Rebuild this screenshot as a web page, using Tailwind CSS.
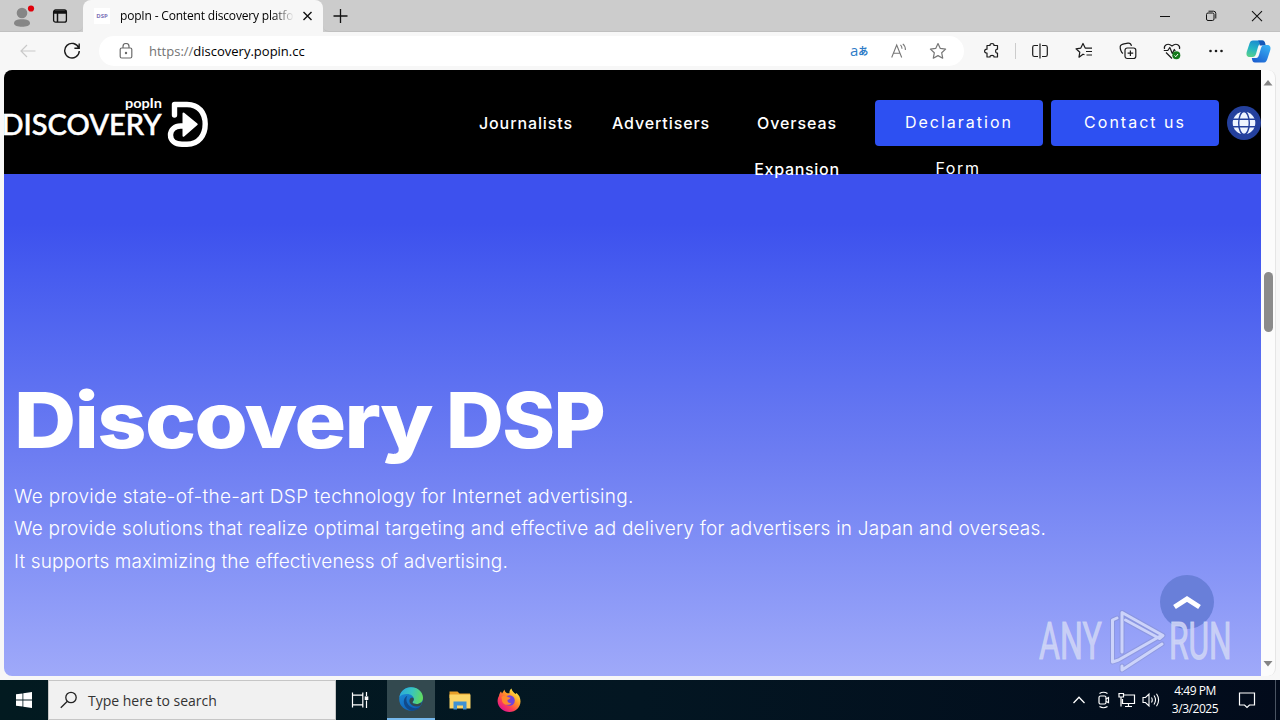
<!DOCTYPE html>
<html lang="en">
<head>
<meta charset="utf-8">
<title>popIn - Content discovery platform</title>
<script src="https://cdn.jsdelivr.net/npm/@tailwindcss/browser@4"></script>
</head>
<body class="w-[1280px] h-[720px] overflow-hidden flex flex-col bg-[#f7f7f7] font-['Open_Sans','Noto_Sans_CJK_JP',sans-serif] text-black">

<!-- Tab strip -->
<div class="h-8 shrink-0 flex bg-[#cccccc]">
  <div class="w-[83px] h-8 flex items-center pl-[12px] rounded-br-md border-b border-[#c0c0c0]">
    <svg class="w-6 h-7 -mt-[3px]" viewBox="0 0 24 28" fill="none"><circle cx="10" cy="13" r="5.300" fill="#868686"/><path d="M2 23.500c0-3 3-4.200 8-4.200s8 1.200 8 4.200c0 2-4 3.300-8 3.300s-8-1.300-8-3.300z" fill="#868686"/><circle cx="19" cy="8.500" r="3.100" fill="#e0000b"/></svg>
    <svg class="w-4 h-4 ml-[16px]" viewBox="0 0 16 16" fill="none" stroke="#111" stroke-width="1.300"><rect x="1.600" y="2" width="12.800" height="12.200" rx="2"/><path d="M2 3.600h12M2 5h12M5.500 5v9" stroke-width="1.500"/></svg>
  </div>
  <div class="w-[240px] h-8 bg-[#f7f7f7] rounded-t-lg flex items-center pl-[11px]">
    <div class="w-4 h-4 bg-white text-[6px] leading-4 text-center font-bold text-[#7d74b8]">DSP</div>
    <div class="ml-[10px] w-[174px] overflow-hidden whitespace-nowrap text-[12px] leading-5 tracking-[-0.180px] bg-linear-to-r from-black from-88% to-transparent bg-clip-text text-transparent">popIn - Content discovery platform</div>
    <svg class="w-3 h-3 ml-[8px]" viewBox="0 0 12 12" stroke="#111" stroke-width="1.400"><path d="M1.500 2l8 8M9.500 2l-8 8"/></svg>
  </div>
  <div class="flex-1 flex items-center justify-between pl-[10px] pr-[17px] rounded-bl-md border-b border-[#c0c0c0]">
    <svg class="w-4 h-4" viewBox="0 0 16 16" stroke="#111" stroke-width="1.300"><path d="M7.500 1v14M.5 8h14"/></svg>
    <div class="flex items-center gap-[34px]">
      <svg class="w-3 h-3" viewBox="0 0 12 12" stroke="#111"><path d="M1 6.500h10"/></svg>
      <svg class="w-3 h-3" viewBox="0 0 12 12" fill="none" stroke="#111"><rect x="1.500" y="3" width="7.500" height="7.500" rx="1.500"/><path d="M3.500 1.200h5a2.300 2.300 0 0 1 2.300 2.300v5"/></svg>
      <svg class="w-3 h-3" viewBox="0 0 12 12" stroke="#111" stroke-width="1.100"><path d="M1 1.200l10 10M11 1.200l-10 10"/></svg>
    </div>
  </div>
</div>

<!-- Toolbar -->
<div class="h-[38px] shrink-0 flex items-center pl-[20px] pr-[9px]">
  <svg class="w-4 h-4" viewBox="0 0 16 16" fill="none" stroke="#c9c9c9" stroke-width="1.200"><path d="M15.500 8H1M7 2L1 8l6 6"/></svg>
  <svg class="w-[18px] h-[18px] ml-[27px]" viewBox="0 0 18 18" fill="none" stroke="#1b1b1b" stroke-width="1.400"><path d="M15.800 6A7.300 7.300 0 1 0 16.300 9M16.200 1.500v4.800h-4.800"/></svg>
  <div class="ml-[18px] w-[865px] h-[30px] bg-white rounded-full flex items-center pl-[20px] pr-[17px]">
    <svg class="w-[14px] h-4" viewBox="0 0 14 16" fill="none" stroke="#6b6b6b" stroke-width="1.200"><rect x="1.200" y="5" width="11.600" height="10" rx="1.500"/><path d="M4 5V3.500a3 3 0 0 1 6 0V5"/><circle cx="7" cy="10" r=".6" fill="#6b6b6b"/></svg>
    <div class="ml-[16px] w-[200px] text-[13px] leading-5 whitespace-nowrap"><span class="text-[#737373]">https://</span>discovery.popin.cc</div>
    <div class="ml-auto flex items-center">
      <div class="w-[18px] -ml-px mr-px text-[#2f7cc7] text-[15px] leading-5 whitespace-nowrap flex items-center"><span class="-mt-0.5">a</span><span class="text-[10px] font-bold">あ</span></div>
      <svg class="w-4 h-4 ml-[22px]" viewBox="0 0 16 16" fill="none" stroke="#777" stroke-width="1.100"><path d="M.7 14.500L5.700 2l5 12.500M2.400 10.300h6.600M9.500 1.800q1.500 1.500 1.500 4M11.800.8q2.800 2.300 2.600 6.200"/></svg>
      <svg class="w-[18px] h-[18px] ml-[22px]" viewBox="0 0 18 18" fill="none" stroke="#777" stroke-width="1.200" stroke-linejoin="round"><path d="M9 1.500l2.300 4.900 5.300.7-3.900 3.700 1 5.400L9 13.600l-4.700 2.600 1-5.400L1.400 7.100l5.300-.7z"/></svg>
    </div>
  </div>
  <svg class="w-[18px] h-[18px] ml-[19px]" viewBox="0 0 18 18" fill="none" stroke="#1b1b1b" stroke-width="1.200" stroke-linejoin="round"><path d="M4 3.500h3C6.500.8 11.500.8 11 3.500h3.500v3.700c-2.500-.3-2.500 4.200 0 3.800V15H11c.4-2.300-4.300-2.300-4 0H4v-4C.8 11.300.8 7 4 7.200z"/></svg>
  <div class="w-px h-4 bg-[#cccccc] ml-[14px]"></div>
  <svg class="w-[18px] h-[18px] ml-[15px]" viewBox="0 0 18 18" fill="none" stroke="#1b1b1b" stroke-width="1.200"><path d="M7 3.500H3.500A1.800 1.800 0 0 0 1.700 5.300v7.400a1.800 1.800 0 0 0 1.800 1.800H7M11 3.500h3.500a1.800 1.800 0 0 1 1.800 1.800v7.400a1.800 1.800 0 0 1-1.800 1.800H11M9 1.500v15"/></svg>
  <svg class="w-[18px] h-[18px] ml-[26px]" viewBox="0 0 18 18" fill="none" stroke="#1b1b1b" stroke-width="1.200" stroke-linejoin="round"><path d="M9.500 12.800L8 12.200l-4 3 .8-5L1 6.800l4.800-.7L8 1.500l2.200 4.600H17M11 9.500h6M11.500 13h5.500"/></svg>
  <svg class="w-[18px] h-[18px] ml-[26px]" viewBox="0 0 18 18" fill="none" stroke="#1b1b1b" stroke-width="1.200"><rect x="6" y="6" width="10.800" height="10.500" rx="2.200"/><path d="M11.400 8.500v5.500M8.600 11.200h5.600M4 11.500C2.200 10.500 1 6.800 1.200 4.500 1.500 2.600 3 2.200 5 1.800l4-.6c1.800-.2 3 .8 3.500 2.600"/></svg>
  <svg class="w-[18px] h-[18px] ml-[26px]" viewBox="0 0 18 18" fill="none" stroke="#1b1b1b" stroke-width="1.200" stroke-linejoin="round"><path d="M1.500 7C.6 3.500 4.500.2 9 4c4.500-3.800 8.400-.5 7.500 3M.8 8.500h4l2-3 2.500 6 2-4 1 1.500M3 10.500l6 6"/><circle cx="13.300" cy="13.300" r="4" fill="#157a1c" stroke="none"/><path d="M11.500 13.500l1.300 1.200 2.200-2.700" stroke="#fff" stroke-width="1"/></svg>
  <svg class="w-[18px] h-[18px] ml-[26px]" viewBox="0 0 18 18" fill="#1b1b1b"><circle cx="3.500" cy="9" r="1.300"/><circle cx="9" cy="9" r="1.300"/><circle cx="14.500" cy="9" r="1.300"/></svg>
  <svg class="w-[25px] h-[23px] ml-auto" viewBox="0 0 25 23">
    <defs><linearGradient id="cp1" x1="0.500" y1="0" x2="0.200" y2="1"><stop offset="0" stop-color="#1c8bd0"/><stop offset=".5" stop-color="#25b5c4"/><stop offset="1" stop-color="#5ad08a"/></linearGradient><linearGradient id="cp2" x1="0.800" y1="0" x2="0.200" y2="1"><stop offset="0" stop-color="#37b0f4"/><stop offset="1" stop-color="#1b5fd0"/></linearGradient></defs>
    <path d="M7 .5h9c2 0 2.700 1.500 3.200 3.500H15c-2 0-2.500 1.500-3 3l-2 7c-.7 2-1.500 3-3.500 3H4c-3 0-4-2-3.300-5L3.500 3.500C4.200 1.500 5 .5 7 .5z" fill="url(#cp1)"/>
    <path d="M13 .5h3.500c2 0 2.700 2 3.200 5h-6C13.500 3.500 14 2 12 .5z" fill="#1557b8"/>
    <path d="M18 22.500H9c-2 0-2.700-1.500-3.200-4.500H10c2 0 2.500-1.500 3-3l2-7c.7-2 1.500-3 3.500-3H21c3 0 4 2 3.300 5l-2.800 8.500c-.7 2-1.500 4-3.500 4z" fill="url(#cp2)"/>
  </svg>
</div>

<!-- Page viewport -->
<div class="h-[610px] shrink-0 flex pl-1 pr-[4px] pb-1">
  <main class="w-[1257px] h-[606px] shrink-0 rounded-l-lg overflow-hidden flex flex-col font-[Inter,sans-serif] text-white">
    <header class="relative z-10 h-[104px] shrink-0 bg-black flex items-start">
      <svg class="w-[206px] h-[60px] mt-[22px] shrink-0" viewBox="4 92 206 60" fill="#fff">
        <text x="1.500" y="134.800" font-family="Lato" font-size="28.500" font-weight="500" stroke="#fff" stroke-width=".5" textLength="160" lengthAdjust="spacingAndGlyphs">DISCOVERY</text>
        <text x="125" y="107.700" font-family="Lato" font-size="13" font-weight="700" textLength="37" lengthAdjust="spacingAndGlyphs">popIn</text>
        <path d="M174.500 115V104.500H187c12 0 18.200 8.500 18.200 19.500s-6.200 20.200-18.200 20.200h-5c-7 0-11.500-3.800-11.500-9.200 0-5.500 4.500-9 10-9h5" fill="none" stroke="#fff" stroke-width="5.400" stroke-linejoin="round" stroke-linecap="round"/>
        <path d="M183.500 113.500l13.200 10.800-13.200 11.500z" stroke="#fff" stroke-width="2" stroke-linejoin="round"/>
      </svg>
      <nav class="ml-[249px] pt-[30px] flex text-[16px] leading-[46px] font-medium text-center">
        <div class="w-[134px] tracking-[0.900px]">Journalists</div>
        <div class="w-[136px] tracking-[0.900px]">Advertisers</div>
        <div class="w-[136px] tracking-[0.900px]"><div>Overseas</div><div class="tracking-[0.700px]">Expansion</div></div>
      </nav>
      <div class="mt-[30px] ml-[10px] flex gap-2 text-[16px] leading-[46px] text-center shrink-0">
        <div class="w-[168px] h-[46px] bg-[#2d50f2] rounded-[4px]"><div class="tracking-[2px] -mt-px">Declaration</div><div class="tracking-[1.600px] pr-0.5">Form</div></div>
        <div class="w-[168px] h-[46px] bg-[#2d50f2] rounded-[4px]"><div class="tracking-[2px] -mt-px">Contact us</div></div>
      </div>
      <svg class="w-[34px] h-[34px] mt-[36px] ml-2 shrink-0" viewBox="0 0 34 34"><circle cx="17" cy="17" r="17" fill="#24409d"/><circle cx="17" cy="17" r="11.300" fill="#eef4ff"/><g fill="none" stroke="#24409d" stroke-width="1.400"><ellipse cx="17" cy="17" rx="5.300" ry="11.500"/><path d="M5 13.200h24M5 20.800h24"/></g></svg>
    </header>
    <section class="flex-1 bg-linear-to-b from-[#3d51ee] from-10% via-[#6d7df2] via-56% to-[#9fa9f9] pl-[10px] pt-[192px]">
      <h1 class="flex text-[77px] leading-[108px] h-[115px] font-extrabold tracking-[-1.500px] whitespace-nowrap"><span class="w-[432px]"><span class="inline-block origin-left scale-x-[1.118]">Discovery</span></span> <span class="inline-block origin-left scale-x-[1.040]">DSP</span></h1>
      <div class="text-[19px] leading-[32.400px] font-light whitespace-nowrap">
        <p class="tracking-[0.300px]">We provide state-of-the-art DSP technology for Internet advertising.</p>
        <p class="tracking-[0.240px]">We provide solutions that realize optimal targeting and effective ad delivery for advertisers in Japan and overseas.</p>
        <p class="tracking-[0.130px]">It supports maximizing the effectiveness of advertising.</p>
      </div>
    </section>
  </main>
  <div class="w-[15px] h-[606px] bg-[#fcfcfc] rounded-r-lg border-r border-[#e6e6e6] flex flex-col items-center">
    <svg class="w-[10px] h-[6px] mt-[10px]" viewBox="0 0 10 6" fill="#858585"><path d="M5 0l4.500 5.500H.5z"/></svg>
    <div class="w-[9px] h-[60px] mt-[186px] rounded-full bg-[#8b8b8b]"></div>
    <svg class="w-[10px] h-[6px] mt-auto mb-[9px]" viewBox="0 0 10 6" fill="#858585"><path d="M5 5.500L.5 0h9z"/></svg>
  </div>
</div>

<!-- Back-to-top button, floating over the page -->
<div class="absolute left-[1160px] top-[575px] w-[54px] h-[54px] rounded-full bg-[#697fd9] flex items-center justify-center">
  <svg class="w-7 h-4" viewBox="0 0 28 16" fill="none" stroke="#fff" stroke-width="5"><path d="M1.500 13L14 5l12.500 8"/></svg>
</div>
<!-- Watermark overlay -->
<svg class="absolute left-[1030px] top-[600px] w-[210px] h-[76px]" viewBox="1030 600 210 76">
  <g fill="#cfd5f6" fill-opacity=".9" stroke="#cfd5f6" stroke-opacity=".8" stroke-width="1.200" font-family="Roboto" font-size="51">
    <text transform="translate(1039 659) scale(.64 1)" textLength="98" lengthAdjust="spacingAndGlyphs">ANY</text>
    <text transform="translate(1169 659) scale(.64 1)" textLength="98" lengthAdjust="spacingAndGlyphs">RUN</text>
  </g>
  <g fill="none" stroke-linejoin="round" stroke-linecap="round">
    <path d="M1117 618l-4.500 2v42l6-2 41-23.500M1122 652v-39.500l41 23-3.500 3-34-18.500M1122 666v4l40-26" stroke="#8089bd" stroke-opacity=".4" stroke-width="5"/>
    <path d="M1117 618l-4.500 2v42l6-2 41-23.500M1122 652v-39.500l41 23-3.500 3-34-18.500M1122 666v4l40-26" stroke="#ccd3fa" stroke-width="3"/>
  </g>
</svg>

<!-- Taskbar -->
<div class="h-10 shrink-0 flex items-center bg-linear-to-r from-[#021a20] via-[#031622] to-[#020b1b] text-white">
  <div class="w-12 flex justify-center"><svg class="w-4 h-4" viewBox="0 0 16 16" fill="#fff"><path d="M0 2.300l6.500-.9v6.200H0zM7.300 1.300L16 0v7.600H7.300zM0 8.400h6.500v6.200L0 13.700zM7.300 8.400H16V16l-8.700-1.300z"/></svg></div>
  <div class="w-[288px] h-10 bg-[#f1f1f1] border border-[#c6c6c6] flex items-center pl-[11px]">
    <svg class="w-[18px] h-[18px]" viewBox="0 0 18 18" fill="none" stroke="#222" stroke-width="1.300"><circle cx="11" cy="6.500" r="5.200"/><path d="M7.400 10.200L.8 16.800"/></svg>
    <span class="ml-[10px] mt-0.5 text-[14px] leading-5 text-[#333]">Type here to search</span>
  </div>
  <div class="w-[51px] flex justify-center pr-[3px]"><svg class="w-[18px] h-[18px]" viewBox="0 0 18 18" fill="none" stroke="#fff" stroke-width="1.200"><path d="M1.500 1.500v2.700h10.300V1.500M1.500 16.500v-2.700h10.300v2.700M1.500 4.200v9.600M11.800 4.200v9.600M15.500 1v4M15.500 9.500v7.500"/><rect x="14.300" y="6" width="2.400" height="2.400" fill="#fff"/></svg></div>
  <div class="w-12 h-10 bg-[#33494f] border-b-2 border-[#76b9ed] flex justify-center items-center">
    <svg class="w-6 h-6" viewBox="0 0 24 24">
      <defs><linearGradient id="e1" x1="0" y1="0.300" x2="1" y2="0.500"><stop offset="0" stop-color="#2aa9dc"/><stop offset=".5" stop-color="#38c4c0"/><stop offset="1" stop-color="#62dc5c"/></linearGradient><linearGradient id="e2" x1="0" y1="0" x2="0.500" y2="1"><stop offset="0" stop-color="#1e93dd"/><stop offset="1" stop-color="#0f61b8"/></linearGradient></defs>
      <circle cx="12" cy="12" r="11.800" fill="url(#e2)"/>
      <path d="M.4 10C1.500 4 6.300.2 12 .2c7 0 12 5 12 10.500 0 4-3 6.300-6.500 6.300-2.500 0-4-.8-4-1.700 0-.7 1.300-1.300 1.300-3.300 0-2.800-3-5-6.800-5-3.500 0-6.300 1.300-7.600 3z" fill="url(#e1)"/>
      <path d="M8.500 8.700C6.500 11 6.700 17.500 13 20.500c3.500 1.500 6.500.7 8.800-1.500-2.300 3.500-5.800 5-9.500 4.800C7 22 4 17.500 5 13c.5-2.200 2-3.800 3.500-4.300z" fill="#114a8b"/>
      <path d="M13.500 15.300c0 .9 1.500 1.700 4 1.700 1.900 0 3.600-.6 4.800-1.800.8.500.3 2.300-.8 3.200-3 2-8 1.300-10.200-1.800-1.800-2.500-.5-6 1.800-6 1.300 0 1.900 1 1.700 2.200-.2 1.200-1.300 1.800-1.300 2.500z" fill="#33494f"/>
    </svg>
  </div>
  <div class="w-[49px] flex justify-center"><svg class="w-[22px] h-[20px]" viewBox="0 0 22 20"><path d="M.5 1.500h8l2 2H21V8H.5z" fill="#e79f28"/><path d="M.5 4.500H21.500V18.500H.5z" fill="#fcd667"/><path d="M4.500 19.500V11.500h13v8h-3.500v-4H8v4z" fill="#3f92d2"/></svg></div>
  <div class="w-[49px] flex justify-center"><svg class="w-6 h-6" viewBox="0 0 24 24">
    <defs><linearGradient id="f1" x1="0.850" y1="0.100" x2="0.200" y2="0.900"><stop offset="0" stop-color="#fff044"/><stop offset=".4" stop-color="#ff9328"/><stop offset=".7" stop-color="#ff4450"/><stop offset="1" stop-color="#e3168b"/></linearGradient></defs>
    <path d="M2 8C2.300 6 3 4.500 4 3.500l1 2L7.500 1.500c.2 2 1.500 3.500 3 3.700h2C12.300 3 13 1.500 14.500.5c.5 2.500 2 3.500 4 5.500l1-1c2.500 2 4 4.800 4 8.500C23.300 19.500 18.500 24 12.500 24S1 19.500.6 13.500C.5 11.500 1 9.500 2 8z" fill="url(#f1)"/>
    <circle cx="12.500" cy="12.500" r="5.300" fill="#7043dc"/><path d="M4.500 9c2-2 5-1.500 7 .3l2 .5c-.2 1.500-2.500 1.500-3 2.200-.3 2.200 1.500 3.500 4 2.700-2 3.300-8 2.800-9.300-1.200z" fill="#ff8a2b"/></svg></div>
  <div class="ml-auto flex items-center">
    <svg class="w-[14px] h-4" viewBox="0 0 14 16" fill="none" stroke="#fff" stroke-width="1.300"><path d="M1.500 11L7 5.300l5.500 5.700"/></svg>
    <svg class="w-[14px] h-[18px] ml-[11px]" viewBox="0 0 14 18" fill="none" stroke="#fff" stroke-width="1.200"><rect x="2" y="5" width="7" height="8" rx="1.500"/><path d="M9 8l2.500-1.500v5L9 10.500M2.500 2.500Q6.500 0 10.500 2.500M2.500 15.500q4 2.500 8 0"/></svg>
    <svg class="w-[18px] h-4 ml-[7px]" viewBox="0 0 18 16" fill="none" stroke="#fff" stroke-width="1.200"><path d="M6 3h10.500v8.500H4.500V7M10.500 11.500v3M7 14.500h7M3 5v9.500M1 1.500h4.500v3.500H1z"/></svg>
    <svg class="w-[18px] h-4 ml-[6px]" viewBox="0 0 18 16" fill="none" stroke="#fff" stroke-width="1.100"><path d="M1 5.500h2.500L7 2v12l-3.500-3.500H1zM9.500 5.500q1.500 2.500 0 5M12 3.500q3 4.500 0 9M14.500 1.700q4.200 6.300 0 12.600"/></svg>
    <div class="ml-[10px] w-[50px] text-[12px] leading-[18px] text-center tracking-[-0.450px] whitespace-nowrap">4:49 PM<br>3/3/2025</div>
    <svg class="w-[18px] h-[18px] ml-[18px] mr-[19px]" viewBox="0 0 18 18" fill="none" stroke="#fff" stroke-width="1.200"><path d="M1.500 2h15v12h-5l-2.500 2.500L6.500 14h-5z"/></svg>
    <div class="w-px h-10 bg-[#4a5462] mr-[4px]"></div>
  </div>
</div>
</body>
</html>
